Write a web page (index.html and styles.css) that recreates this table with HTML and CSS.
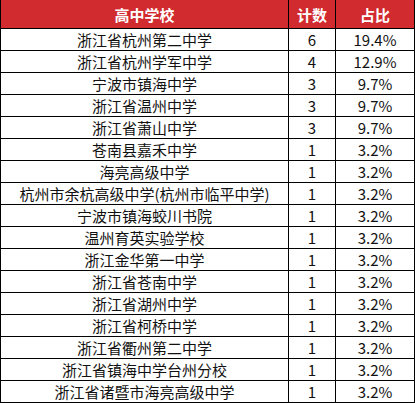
FILE: index.html
```html
<!DOCTYPE html>
<html lang="zh">
<head>
<meta charset="utf-8">
<link rel="stylesheet" href="styles.css">
</head>
<body>
<div class="grid">
  <div class="cell head">高中学校</div><div class="cell head">计数</div><div class="cell head">占比</div>
  <div class="cell">浙江省杭州第二中学</div><div class="cell">6</div><div class="cell">19.4%</div>
  <div class="cell">浙江省杭州学军中学</div><div class="cell">4</div><div class="cell">12.9%</div>
  <div class="cell">宁波市镇海中学</div><div class="cell">3</div><div class="cell">9.7%</div>
  <div class="cell">浙江省温州中学</div><div class="cell">3</div><div class="cell">9.7%</div>
  <div class="cell">浙江省萧山中学</div><div class="cell">3</div><div class="cell">9.7%</div>
  <div class="cell">苍南县嘉禾中学</div><div class="cell">1</div><div class="cell">3.2%</div>
  <div class="cell">海亮高级中学</div><div class="cell">1</div><div class="cell">3.2%</div>
  <div class="cell">杭州市余杭高级中学(杭州市临平中学)</div><div class="cell">1</div><div class="cell">3.2%</div>
  <div class="cell">宁波市镇海蛟川书院</div><div class="cell">1</div><div class="cell">3.2%</div>
  <div class="cell">温州育英实验学校</div><div class="cell">1</div><div class="cell">3.2%</div>
  <div class="cell">浙江金华第一中学</div><div class="cell">1</div><div class="cell">3.2%</div>
  <div class="cell">浙江省苍南中学</div><div class="cell">1</div><div class="cell">3.2%</div>
  <div class="cell">浙江省湖州中学</div><div class="cell">1</div><div class="cell">3.2%</div>
  <div class="cell">浙江省柯桥中学</div><div class="cell">1</div><div class="cell">3.2%</div>
  <div class="cell">浙江省衢州第二中学</div><div class="cell">1</div><div class="cell">3.2%</div>
  <div class="cell">浙江省镇海中学台州分校</div><div class="cell">1</div><div class="cell">3.2%</div>
  <div class="cell">浙江省诸暨市海亮高级中学</div><div class="cell">1</div><div class="cell">3.2%</div>
</div>
</body>
</html>
```
FILE: styles.css
```css
html, body {
  margin: 0;
  padding: 0;
  background: #ffffff;
}
.grid {
  display: grid;
  grid-template-columns: 288px 47px 79px;
  grid-template-rows: 29px repeat(17, 22px);
  width: 414px;
  border-left: 1px solid #000;
  font-family: "Noto Sans CJK SC", "Noto Sans", sans-serif;
  font-size: 15px;
  color: #111;
}
.cell {
  display: flex;
  align-items: center;
  justify-content: center;
  border-right: 1px solid #000;
  border-bottom: 1px solid #000;
  line-height: 1;
  white-space: nowrap;
}
.head {
  background: #d12a2f;
  color: #fff;
  font-weight: bold;
}
```
